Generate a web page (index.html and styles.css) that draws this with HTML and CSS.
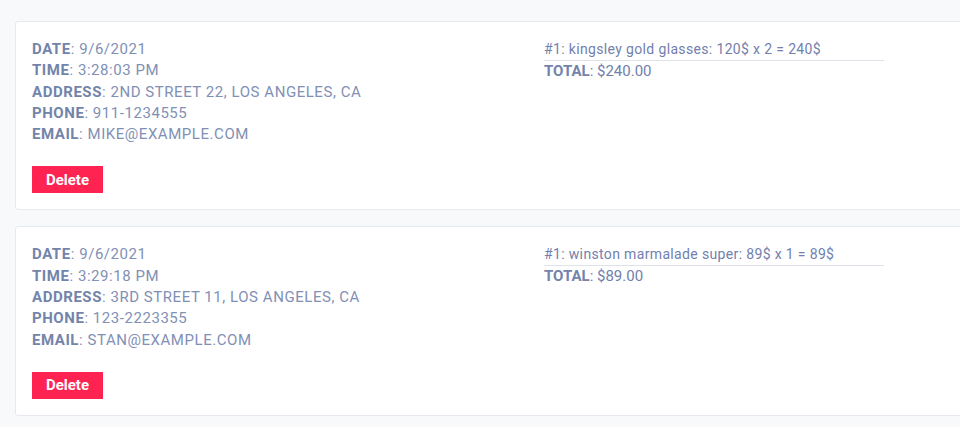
FILE: index.html
```html
<!DOCTYPE html>
<html lang="en">
<head>
  <meta charset="UTF-8" />
  <meta name="viewport" content="width=device-width, initial-scale=1" />
  <title>Orders</title>
  <link rel="stylesheet" href="styles.css">
</head>
<body>

<div class="orders">
  <div class="order">
    <div class="info">
      <div class="row"><b>DATE</b>: 9/6/2021</div>
      <div class="row"><b>TIME</b>: 3:28:03 PM</div>
      <div class="row"><b>ADDRESS</b>: 2ND STREET 22, LOS ANGELES, CA</div>
      <div class="row"><b>PHONE</b>: 911-1234555</div>
      <div class="row"><b>EMAIL</b>: MIKE@EXAMPLE.COM</div>
      <button class="delete">Delete</button>
    </div>
    <div class="items">
      <div class="item">#1: kingsley gold glasses: 120$ x 2 = 240$</div>
      <div class="total"><b>TOTAL</b>: $240.00</div>
    </div>
  </div>

  <div class="order">
    <div class="info">
      <div class="row"><b>DATE</b>: 9/6/2021</div>
      <div class="row"><b>TIME</b>: 3:29:18 PM</div>
      <div class="row"><b>ADDRESS</b>: 3RD STREET 11, LOS ANGELES, CA</div>
      <div class="row"><b>PHONE</b>: 123-2223355</div>
      <div class="row"><b>EMAIL</b>: STAN@EXAMPLE.COM</div>
      <button class="delete">Delete</button>
    </div>
    <div class="items">
      <div class="item">#1: winston marmalade super: 89$ x 1 = 89$</div>
      <div class="total"><b>TOTAL</b>: $89.00</div>
    </div>
  </div>
</div>

</body>
</html>
```

FILE: styles.css
```css
body {
  margin: 0;
  background: #f8f9fb;
  font-family: Roboto, "Liberation Sans", sans-serif;
  font-size: 15px;
  color: #8190b5;
  overflow: hidden;
}
.orders {
  padding: 21px 0 0 15px;
  width: 1100px;
}
.order {
  display: grid;
  grid-template-columns: 512px 1fr;
  background: #fff;
  border: 1px solid #e6e9ef;
  border-radius: 3px;
  padding: 17px 16px 16px;
  margin-bottom: 16px;
}
.row {
  line-height: 21.3px;
  letter-spacing: 0.55px;
}
b {
  font-weight: 700;
  color: #7384ab;
}
.delete {
  margin-top: 21px;
  width: 71px;
  height: 27px;
  border: none;
  background: #ff2352;
  color: #fff;
  font-family: Roboto, "Liberation Sans", sans-serif;
  font-weight: 700;
  font-size: 15px;
  padding: 0;
  cursor: pointer;
}
.items {
  width: 340px;
}
.item {
  font-size: 14px;
  letter-spacing: 0.35px;
  line-height: 21px;
  border-bottom: 1px solid #dfe2e9;
  color: #7180ad;
}
.total {
  line-height: 21px;
  color: #7180ad;
}
```
